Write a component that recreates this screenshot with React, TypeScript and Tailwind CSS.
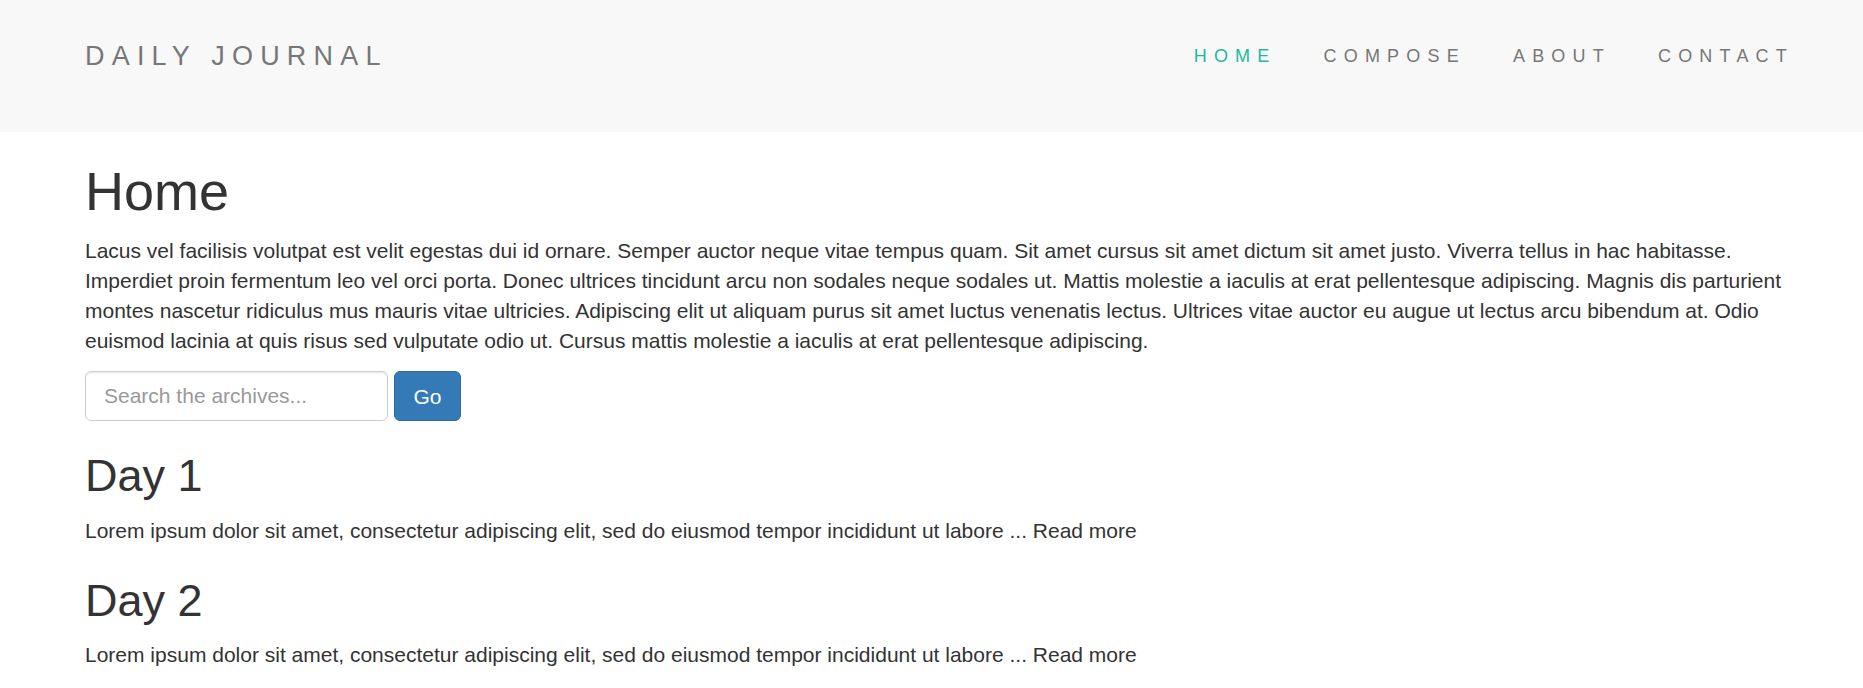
import { useState } from 'react';

const posts = [
  {
    title: 'Day 1',
    body: 'Lorem ipsum dolor sit amet, consectetur adipiscing elit, sed do eiusmod tempor incididunt ut labore ...',
  },
  {
    title: 'Day 2',
    body: 'Lorem ipsum dolor sit amet, consectetur adipiscing elit, sed do eiusmod tempor incididunt ut labore ...',
  },
];

const navItems = ['HOME', 'COMPOSE', 'ABOUT', 'CONTACT'];

export default function App() {
  const [query, setQuery] = useState('');

  return (
    <div className="min-h-screen bg-white font-['Liberation_Sans',Arial,sans-serif] text-[#333]">
      <header className="h-[132px] bg-[#f8f8f8]">
        <div className="flex h-[112px] items-center justify-between pl-[85px] pr-[69px]">
          <a href="#" className="text-[27px] leading-none tracking-[7.2px] text-[#777]">
            DAILY JOURNAL
          </a>
          <nav className="flex items-center gap-[47px]">
            {navItems.map((item) => (
              <a
                key={item}
                href="#"
                className={`text-[18px] leading-none tracking-[7.2px] ${
                  item === 'HOME' ? 'text-[#1abc9c]' : 'text-[#777]'
                }`}
              >
                {item}
              </a>
            ))}
          </nav>
        </div>
      </header>

      <main className="pl-[85px] pr-[55px]">
        <h1 className="mt-[30px] mb-[15px] text-[54px] leading-[1.1] font-normal">Home</h1>
        <p className="mb-[15px] text-[21px] leading-[30px]">
          Lacus vel facilisis volutpat est velit egestas dui id ornare. Semper auctor neque vitae tempus quam. Sit amet cursus sit amet dictum sit amet justo. Viverra tellus in hac habitasse. Imperdiet proin fermentum leo vel orci porta. Donec ultrices tincidunt arcu non sodales neque sodales ut. Mattis molestie a iaculis at erat pellentesque adipiscing. Magnis dis parturient montes nascetur ridiculus mus mauris vitae ultricies. Adipiscing elit ut aliquam purus sit amet luctus venenatis lectus. Ultrices vitae auctor eu augue ut lectus arcu bibendum at. Odio euismod lacinia at quis risus sed vulputate odio ut. Cursus mattis molestie a iaculis at erat pellentesque adipiscing.
        </p>

        <form className="flex items-center gap-[6px]" onSubmit={(e) => e.preventDefault()}>
          <input
            type="text"
            value={query}
            onChange={(e) => setQuery(e.target.value)}
            placeholder="Search the archives..."
            className="h-[50px] w-[303px] rounded-[6px] border-[1.5px] border-[#ccc] bg-white px-[18px] text-[21px] text-[#555] shadow-[inset_0_1.5px_1.5px_rgba(0,0,0,0.075)] outline-none placeholder:text-[#999]"
          />
          <button
            type="submit"
            className="h-[50px] w-[67px] rounded-[6px] border-[1.5px] border-[#2e6da4] bg-[#337ab7] text-[21px] text-white"
          >
            Go
          </button>
        </form>

        {posts.map((post) => (
          <div key={post.title}>
            <h2 className="mt-[30px] mb-[15px] text-[45px] leading-[1.1] font-normal">{post.title}</h2>
            <p className="mb-[15px] text-[21px] leading-[30px]">
              {post.body}{' '}
              <a href="#" className="text-[#333]">
                Read more
              </a>
            </p>
          </div>
        ))}
      </main>
    </div>
  );
}
